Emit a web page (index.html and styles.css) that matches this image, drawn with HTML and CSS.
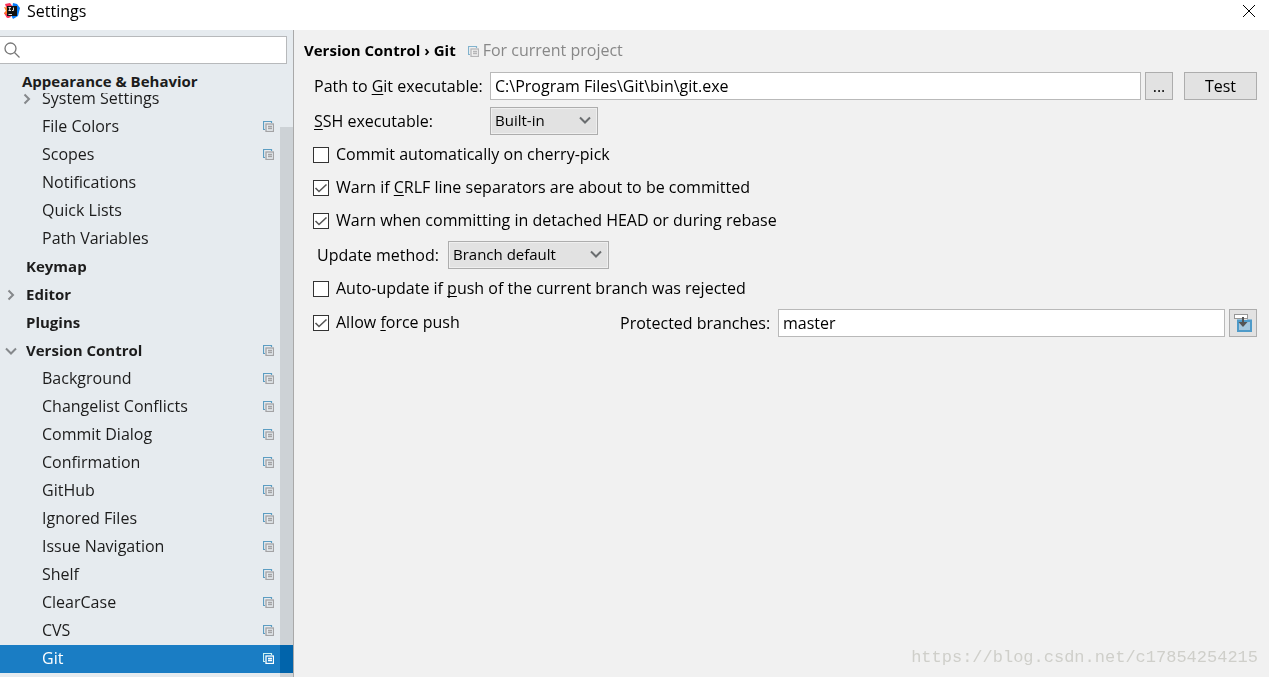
FILE: index.html
```html
<!DOCTYPE html>
<html lang="en">
<head>
<meta charset="utf-8">
<title>Settings</title>
<link rel="stylesheet" href="styles.css">
</head>
<body>
<svg class="defs" aria-hidden="true">
  <symbol id="copy" viewBox="0 0 11 11">
    <path class="copy-back" d="M2 8.500H.5V.5H8.500V2"/>
    <rect class="copy-front" x="3" y="3" width="7.500" height="7.500"/>
    <path class="copy-front" d="M5 5.500H9M5 7.500H9"/>
  </symbol>
  <symbol id="right" viewBox="0 0 12 12"><path class="arrow" d="M3.500 1.500L8 6L3.500 10.500"/></symbol>
  <symbol id="down" viewBox="0 0 12 12"><path class="arrow" d="M1 3.500L6 8.500L11 3.500"/></symbol>
  <symbol id="tick" viewBox="0 0 16 16"><path class="tick-line" d="M2.500 8L6 11.500L13.500 4.500"/></symbol>
</svg>

<header class="titlebar">
  <svg class="logo" viewBox="0 0 16 16" aria-hidden="true">
    <path fill="#fc3159" d="M1 1L6 0L9 4L6 14L3 15L0 10L3 7Z"/>
    <path fill="#fc801d" d="M0 4L4 5L5 12L0 11L2 8Z"/>
    <path fill="#087cfa" d="M9 0L13 1L16 5L14 13L9 16L7 12Z"/>
    <path fill="#fc3159" d="M1 11L5 10L7 14L4 15Z"/>
    <rect x="3" y="3" width="10" height="10" fill="#111"/>
    <path stroke="#ddd" fill="none" d="M4.500 4.500H7M5.700 4.500V7.500M4.500 7.500H7M9.500 4.500V7.500H8M4.500 11.500H8"/>
  </svg>
  <h1 class="title">Settings</h1>
  <button class="close" aria-label="Close">
    <svg viewBox="0 0 12 12" width="12" height="12"><path d="M0 0L12 12M12 0L0 12" stroke="#000" fill="none"/></svg>
  </button>
</header>

<div class="body">
  <nav class="sidebar">
    <label class="search">
      <svg viewBox="0 0 16 16" width="16" height="16" aria-hidden="true"><circle cx="6.500" cy="6.500" r="5.500"/><path d="M10.500 10.500L15.500 15.500"/></svg>
      <input type="text" aria-label="Search settings">
    </label>
    <div class="group-head">Appearance &amp; Behavior</div>
    <ul class="tree">
      <li class="item nested"><svg class="toggle"><use href="#right"/></svg><span class="name">System Settings</span></li>
      <li class="item nested"><span class="name">File Colors</span><svg class="copy"><use href="#copy"/></svg></li>
      <li class="item nested"><span class="name">Scopes</span><svg class="copy"><use href="#copy"/></svg></li>
      <li class="item nested"><span class="name">Notifications</span></li>
      <li class="item nested"><span class="name">Quick Lists</span></li>
      <li class="item nested"><span class="name">Path Variables</span></li>
      <li class="item top"><span class="name">Keymap</span></li>
      <li class="item top"><svg class="toggle"><use href="#right"/></svg><span class="name">Editor</span></li>
      <li class="item top"><span class="name">Plugins</span></li>
      <li class="item top"><svg class="toggle"><use href="#down"/></svg><span class="name">Version Control</span><svg class="copy"><use href="#copy"/></svg></li>
      <li class="item nested"><span class="name">Background</span><svg class="copy"><use href="#copy"/></svg></li>
      <li class="item nested"><span class="name">Changelist Conflicts</span><svg class="copy"><use href="#copy"/></svg></li>
      <li class="item nested"><span class="name">Commit Dialog</span><svg class="copy"><use href="#copy"/></svg></li>
      <li class="item nested"><span class="name">Confirmation</span><svg class="copy"><use href="#copy"/></svg></li>
      <li class="item nested"><span class="name">GitHub</span><svg class="copy"><use href="#copy"/></svg></li>
      <li class="item nested"><span class="name">Ignored Files</span><svg class="copy"><use href="#copy"/></svg></li>
      <li class="item nested"><span class="name">Issue Navigation</span><svg class="copy"><use href="#copy"/></svg></li>
      <li class="item nested"><span class="name">Shelf</span><svg class="copy"><use href="#copy"/></svg></li>
      <li class="item nested"><span class="name">ClearCase</span><svg class="copy"><use href="#copy"/></svg></li>
      <li class="item nested"><span class="name">CVS</span><svg class="copy"><use href="#copy"/></svg></li>
      <li class="item nested selected"><span class="name">Git</span><svg class="copy"><use href="#copy"/></svg></li>
    </ul>
    <div class="scroll-thumb"></div>
  </nav>

  <main class="panel">
    <div class="crumbs">
      <h2 class="path">Version Control › Git</h2>
      <svg class="copy pale"><use href="#copy"/></svg>
      <span class="scope">For current project</span>
    </div>

    <div class="row">
      <label class="caption" for="git-path">Path to <u>G</u>it executable:</label>
      <input class="field" id="git-path" type="text" value="C:\Program Files\Git\bin\git.exe">
      <button class="button browse">...</button>
      <button class="button test">Test</button>
    </div>

    <div class="row">
      <label class="caption" for="ssh"><u>S</u>SH executable:</label>
      <span class="combo ssh">
        <select id="ssh"><option>Built-in</option></select>
        <svg class="toggle"><use href="#down"/></svg>
      </span>
    </div>

    <label class="check"><span class="box"><input type="checkbox"><svg><use href="#tick"/></svg></span><span class="text">Commit automatically on cherry-pick</span></label>
    <label class="check"><span class="box"><input type="checkbox" checked><svg><use href="#tick"/></svg></span><span class="text">Warn if <u>C</u>RLF line separators are about to be committed</span></label>
    <label class="check"><span class="box"><input type="checkbox" checked><svg><use href="#tick"/></svg></span><span class="text">Warn when committing in detached HEAD or during rebase</span></label>

    <div class="row">
      <label class="caption update" for="method">Update method:</label>
      <span class="combo method">
        <select id="method"><option>Branch default</option></select>
        <svg class="toggle"><use href="#down"/></svg>
      </span>
    </div>

    <label class="check"><span class="box"><input type="checkbox"><svg><use href="#tick"/></svg></span><span class="text">Auto-update if <u>p</u>ush of the current branch was rejected</span></label>

    <div class="row">
      <label class="check force"><span class="box"><input type="checkbox" checked><svg><use href="#tick"/></svg></span><span class="text">Allow <u>f</u>orce push</span></label>
      <label class="caption protected" for="protected">Protected branches:</label>
      <input class="field" id="protected" type="text" value="master">
      <button class="button browse" aria-label="Expand field">
        <svg viewBox="0 0 18 18" width="18" height="18">
          <rect x="3.500" y="7.500" width="14" height="10" fill="#a6c8de"/>
          <path d="M3 6.500H9M13 6.500H18" stroke="#4496c8" stroke-width="2" fill="none"/>
          <rect x="4" y="7" width="13" height="10" stroke="#4f9bc9" stroke-width="2" fill="none"/>
          <rect x=".5" y=".5" width="13" height="4" fill="#fff" stroke="#969696"/>
          <path d="M9 3V9" stroke="#555" stroke-width="2"/>
          <path d="M4.500 8H13.500L9 13Z" fill="#555"/>
        </svg>
      </button>
    </div>
  </main>
</div>
<div class="watermark">https://blog.csdn.net/c17854254215</div>
</body>
</html>
```
FILE: styles.css
```css
* { box-sizing: border-box; }

body {
  margin: 0;
  min-height: 100vh;
  display: flex;
  flex-direction: column;
  position: relative;
  background: #f1f1f1;
  color: #000;
  font: 16px/20px "Open Sans", "Noto Sans", sans-serif;
}

input, select, button { font: inherit; color: inherit; margin: 0; border-radius: 0; }
svg { flex: none; }
u { text-underline-offset: 2px; text-decoration-thickness: 1px; text-decoration-skip-ink: none; }

.defs { position: absolute; width: 0; height: 0; }
.copy-back { fill: none; stroke: #5c9dc2; stroke-width: 1.2; }
.copy-front { fill: none; stroke: #a3a3a5; stroke-width: 1.3; }
.arrow { fill: none; stroke: #85888b; stroke-width: 2; }
.tick-line { fill: none; stroke: #555; stroke-width: 1.6; }

.titlebar {
  display: flex;
  align-items: center;
  height: 30px;
  padding: 0 14px 8px 4px;
  background: #fff;
}
.logo { width: 16px; height: 16px; }
.title { margin: 0 0 0 7px; font-size: 16px; font-weight: 400; }
.close { margin-left: auto; padding: 0; border: 0; background: none; display: flex; }

.body { flex: 1; display: flex; }

.sidebar {
  position: relative;
  flex: none;
  width: 294px;
  padding-top: 6px;
  border-right: 1px solid #a9a9a9;
  background: #e6ebef;
  color: #1c1c1c;
}
.search {
  display: flex;
  align-items: center;
  height: 28px;
  margin-right: 6px;
  padding-left: 4px;
  border: 1px solid #b7b9bb;
  border-left: 0;
  background: #fff;
}
.search svg { fill: none; stroke: #777; stroke-width: 1.3; }
.search input { flex: 1; min-width: 0; border: 0; outline: 0; background: none; }

.group-head {
  position: relative;
  z-index: 1;
  margin-top: 5px;
  padding: 2px 0 2px 22px;
  background: #e6ebef;
  font-size: 15px;
  font-weight: 700;
}
.tree { list-style: none; margin: -8px 0 0; padding: 0; }
.item {
  display: grid;
  grid-template-columns: 20px 1fr 11px;
  align-items: center;
  height: 28px;
  padding-right: 19px;
}
.item .name { grid-column: 2; grid-row: 1; padding: 0 0 2px 2px; }
.item .copy { grid-column: 3; grid-row: 1; margin-bottom: 1px; }
.item.top { padding-left: 4px; font-size: 15px; font-weight: 700; }
.item.nested { padding-left: 20px; }
.toggle { width: 12px; height: 12px; margin-left: 1px; }
.copy { width: 11px; height: 11px; }
.pale { opacity: .75; }
.selected { background: #1a7dc4; color: #fff; }
.selected .copy { filter: brightness(1.7) saturate(0.4); }

.scroll-thumb {
  position: absolute;
  top: 97px;
  right: 0;
  bottom: 0;
  width: 13px;
  background: #191919;
  mix-blend-mode: difference;
}

.panel {
  flex: 1;
  min-width: 0;
  display: flex;
  flex-direction: column;
  gap: 7px;
  padding: 7px 12px 0 10px;
}
.crumbs { display: flex; align-items: center; height: 28px; }
.path { margin: 0 12px 0 0; padding-bottom: 2px; font-size: 15px; font-weight: 700; }
.scope { margin-left: 4px; padding-bottom: 2px; color: #888; }

.row { display: flex; align-items: center; min-height: 28px; }
.caption { flex: none; width: 186px; padding-left: 10px; }
.caption.update { width: 144px; padding-left: 13px; }
.caption.protected { width: 158px; padding-left: 0; }
.field {
  flex: 1;
  min-width: 0;
  height: 28px;
  padding: 0 4px;
  border: 1px solid #b9b9b9;
  background: #fff;
  outline: 0;
}
.button {
  display: flex;
  align-items: center;
  justify-content: center;
  height: 28px;
  padding: 0;
  border: 1px solid #adadad;
  background: #e2e2e2;
}
.browse { width: 28px; margin-left: 4px; }
.test { width: 73px; margin-left: 11px; }

.combo { display: grid; align-items: center; height: 28px; font-size: 15px; }
.combo > * { grid-area: 1 / 1; }
.combo select {
  appearance: none;
  width: 100%;
  height: 28px;
  padding: 0 24px 2px 4px;
  border: 1px solid #adadad;
  background: #e2e2e2;
  box-shadow: inset 0 0 0 1px #efefef;
}
.combo .toggle { justify-self: end; margin: 0 7px 2px 0; pointer-events: none; }
.combo .toggle { filter: brightness(.8); }
.ssh { width: 108px; }
.method { width: 161px; }

.check { display: flex; align-items: center; gap: 7px; height: 26px; padding-left: 9px; }
.check .text { padding-bottom: 2px; }
.force { flex: none; width: 316px; }
.box { display: grid; width: 16px; height: 16px; }
.box > * { grid-area: 1 / 1; width: 16px; height: 16px; }
.box input { appearance: none; border: 1px solid #333; background: #fff; }
.box svg { visibility: hidden; pointer-events: none; }
.box input:checked + svg { visibility: visible; }

.watermark {
  position: absolute;
  right: 11px;
  bottom: 7px;
  color: #cfcfca;
  font: 17px/24px "Liberation Mono", monospace;
}
```
